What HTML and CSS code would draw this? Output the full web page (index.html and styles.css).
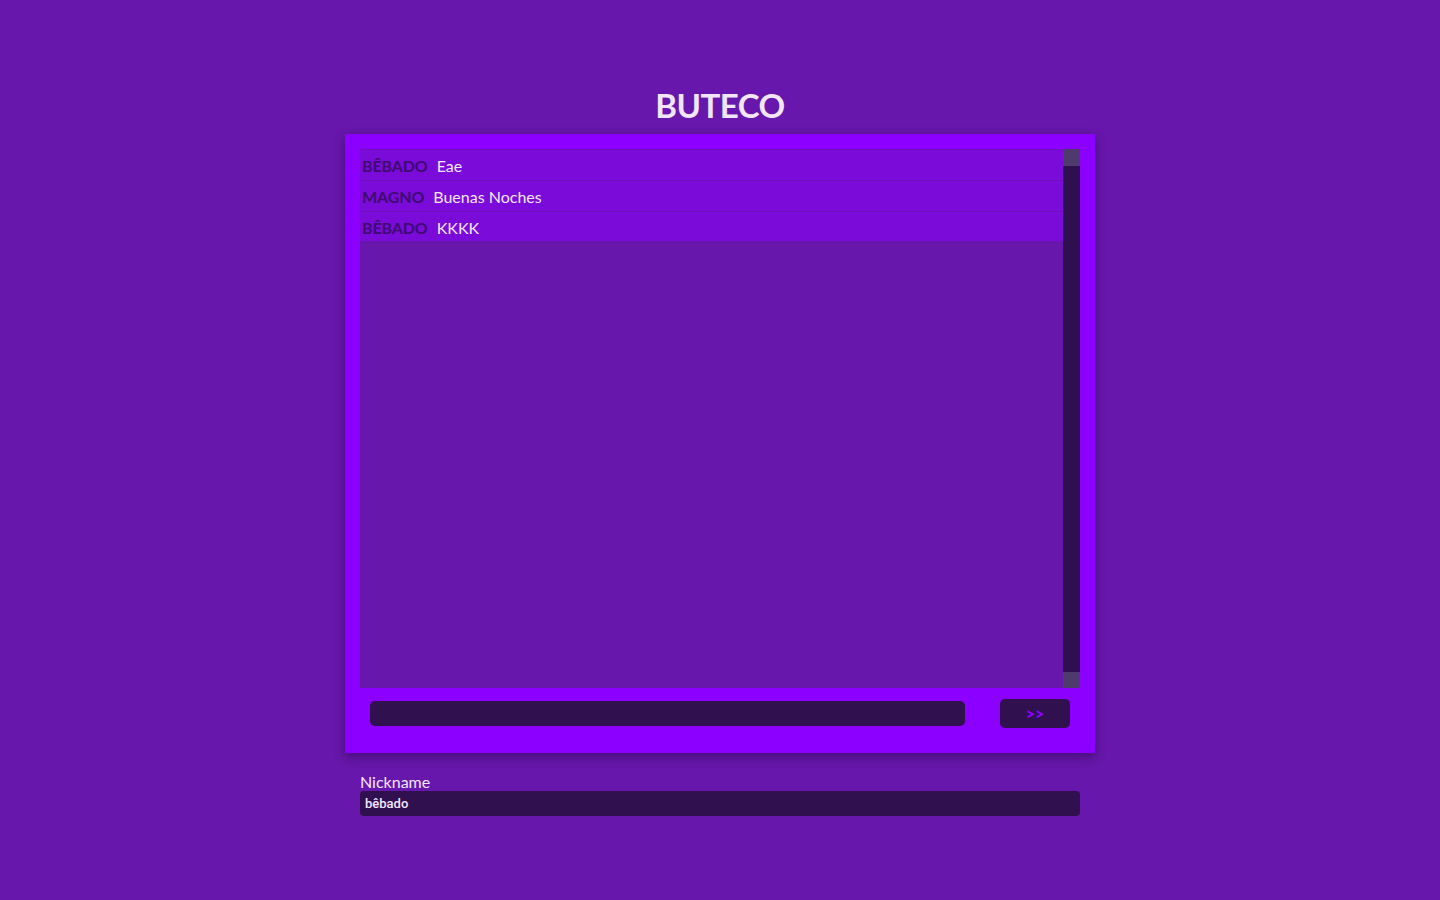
FILE: index.html
```html
<!DOCTYPE html>
<html lang="pt">
<head>
<meta charset="utf-8">
<title>Buteco</title>
<link rel="stylesheet" href="styles.css">
</head>
<body>
<h1 class="title">BUTECO</h1>
<main class="card">
  <div class="chat">
    <ul class="messages">
      <li class="msg"><span class="nick">BÊBADO</span><span class="text">Eae</span></li>
      <li class="msg"><span class="nick">MAGNO</span><span class="text">Buenas Noches</span></li>
      <li class="msg"><span class="nick">BÊBADO</span><span class="text">KKKK</span></li>
    </ul>
    <div class="scrollbar">
      <div class="sb-btn"></div>
      <div class="sb-track"></div>
      <div class="sb-btn"></div>
    </div>
  </div>
  <form class="composer">
    <input class="composer-input" type="text">
    <button class="send" type="button">&gt;&gt;</button>
  </form>
</main>
<section class="nickname">
  <label class="nick-label" for="nick">Nickname</label>
  <input class="nick-input" id="nick" type="text" value="bêbado">
</section>
</body>
</html>
```

FILE: styles.css
```css
* { box-sizing: border-box; }
html, body { margin: 0; padding: 0; }
body {
  background: #6717ab;
  font-family: Lato, "Open Sans", sans-serif;
  color: #f3e6ff;
  display: flex;
  flex-direction: column;
  align-items: center;
  min-height: 900px;
}
.title {
  margin: 84px 0 0;
  height: 50px;
  font-size: 33px;
  line-height: 42px;
  font-weight: 700;
  color: #f1e6f8;
  letter-spacing: -0.5px;
}
.card {
  width: 750px;
  padding: 15px 15px 15px;
  background: #8c00ff;
  box-shadow: 0 4px 10px rgba(30, 0, 60, 0.45);
}
.chat {
  display: flex;
  height: 539px;
  background: #6717ab;
}
.messages {
  flex: 1;
  list-style: none;
  margin: 0;
  padding: 0;
}
.msg {
  display: flex;
  align-items: center;
  gap: 9px;
  height: 31px;
  padding: 1px 2px 0;
  border-top: 1px solid #6a10b4;
  background: #7a0bd8;
  font-size: 16px;
}
.msg:last-child { height: 30px; }
.nick { color: #3f0a72; font-weight: 700; font-size: 16px; letter-spacing: -0.1px; }
.text { color: #f3e6ff; }
.scrollbar {
  width: 17px;
  display: flex;
  flex-direction: column;
}
.sb-btn { height: 17px; background: #4f3a6e; }
.sb-btn:last-child { height: 16px; }
.sb-track { flex: 1; background: #2e1050; }
.composer {
  display: flex;
  align-items: center;
  justify-content: space-between;
  height: 50px;
  margin: 0;
  padding: 0 10px;
}
.composer-input {
  width: 595px;
  height: 25px;
  border: none;
  border-radius: 5px;
  background: #30104f;
  outline: none;
}
.send {
  width: 70px;
  height: 29px;
  border: none;
  border-radius: 5px;
  background: #30104f;
  color: #8c00ff;
  font-family: Lato, sans-serif;
  font-weight: 900;
  font-size: 16px;
  padding: 0;
}
.nickname {
  width: 720px;
  margin-top: 20px;
  display: flex;
  flex-direction: column;
}
.nick-label {
  font-size: 16px;
  line-height: 18px;
  color: #f3e6ff;
}
.nick-input {
  height: 25px;
  border: none;
  border-radius: 4px;
  background: #30104f;
  color: #f3e6ff;
  font-family: Roboto, Arial, sans-serif;
  font-weight: 500;
  font-size: 13px;
  padding: 0 5px;
  outline: none;
}
```
